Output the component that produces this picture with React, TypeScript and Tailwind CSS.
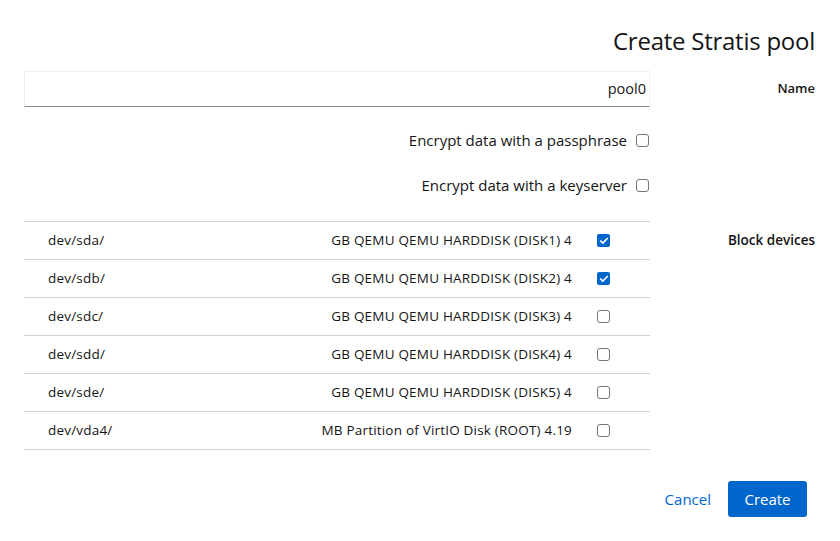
import { Check } from 'lucide-react';

const devices = [
  { path: 'dev/sda/', desc: 'GB QEMU QEMU HARDDISK (DISK1) 4', checked: true },
  { path: 'dev/sdb/', desc: 'GB QEMU QEMU HARDDISK (DISK2) 4', checked: true },
  { path: 'dev/sdc/', desc: 'GB QEMU QEMU HARDDISK (DISK3) 4', checked: false },
  { path: 'dev/sdd/', desc: 'GB QEMU QEMU HARDDISK (DISK4) 4', checked: false },
  { path: 'dev/sde/', desc: 'GB QEMU QEMU HARDDISK (DISK5) 4', checked: false },
  { path: 'dev/vda4/', desc: 'MB Partition of VirtIO Disk (ROOT) 4.19', checked: false },
];

function Box({ checked }: { checked?: boolean }) {
  if (checked) {
    return (
      <span className="w-[13px] h-[13px] rounded-[2px] bg-[#0066cc] flex items-center justify-center shrink-0">
        <Check className="w-[10px] h-[10px] text-white" strokeWidth={4} />
      </span>
    );
  }
  return <span className="w-[13px] h-[13px] rounded-[3px] border border-[#767676] bg-white shrink-0" />;
}

export default function App() {
  return (
    <div
      className="w-[840px] h-[541px] bg-white text-[#151515] overflow-hidden"
      style={{ fontFamily: '"Open Sans", "Liberation Sans", sans-serif' }}
    >
      <div className="pr-[25px] pl-[24px] pt-[26px]">
        {/* Title */}
        <h1 className="text-right text-[24px] leading-[30px] text-[#151515] tracking-[-0.25px]">
          Create Stratis pool
        </h1>

        <div className="grid grid-cols-[626px_1fr] mt-[15px]">
          {/* Name */}
          <div className="h-[36px] border border-[#f0f0f0] border-b-[#8a8d90] flex items-center justify-end pr-[3px] text-[14.5px] text-[#151515]">
            pool0
          </div>
          <div className="flex items-center justify-end text-[13px] font-semibold">Name</div>

          {/* Encryption */}
          <div className="flex flex-col items-end pt-[26px] gap-[30px] pr-[1px] text-[15px]">
            <label className="flex items-center gap-[9px] h-[15px]">
              <span>Encrypt data with a passphrase</span>
              <Box />
            </label>
            <label className="flex items-center gap-[9px] h-[15px]">
              <span>Encrypt data with a keyserver</span>
              <Box />
            </label>
          </div>
          <div />

          {/* Block devices */}
          <div className="mt-[28px] border-t border-[#d2d2d2]">
            {devices.map((d) => (
              <div
                key={d.path}
                className="h-[38px] border-b border-[#d2d2d2] flex items-center pl-[24px] pr-[40px] text-[13.5px]"
              >
                <span className="flex-1 tracking-[0.2px]">{d.path}</span>
                <span className="mr-[25px] tracking-[0.2px]">{d.desc}</span>
                <Box checked={d.checked} />
              </div>
            ))}
          </div>
          <div className="mt-[28px] h-[38px] flex items-center justify-end text-[13.5px] font-semibold">
            Block devices
          </div>
        </div>

        {/* Footer */}
        <div className="flex justify-end items-center gap-[17px] mt-[31px] pr-[8px]">
          <button className="text-[#0066cc] text-[15px] px-[0px]">Cancel</button>
          <button className="bg-[#0066cc] text-white text-[15px] rounded-[3px] w-[79px] h-[36px]">
            Create
          </button>
        </div>
      </div>
    </div>
  );
}
